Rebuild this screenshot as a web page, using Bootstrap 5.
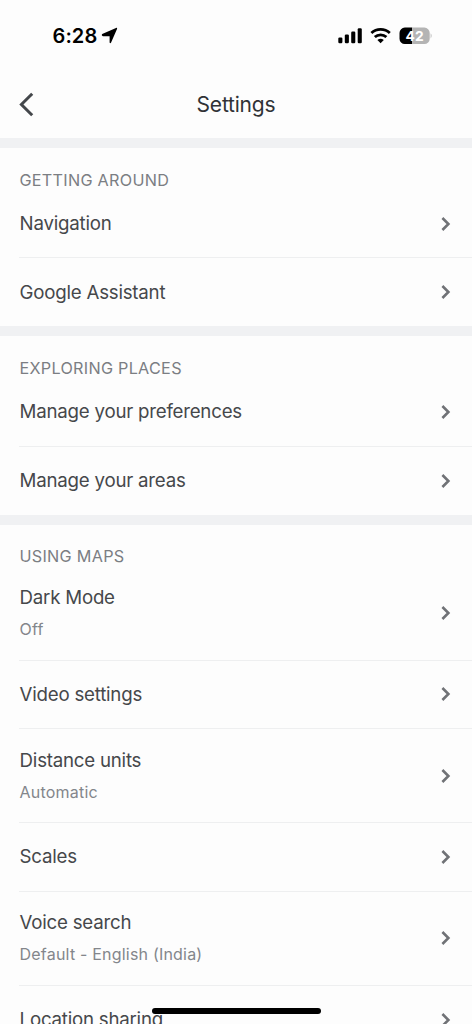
<!DOCTYPE html>
<html lang="en">
<head>
<meta charset="utf-8">
<meta name="viewport" content="width=device-width, initial-scale=1">
<title>Settings</title>
<link href="https://cdn.jsdelivr.net/npm/bootstrap@5.3.0/dist/css/bootstrap.min.css" rel="stylesheet">
<style>
  body { font-family: Inter, "Liberation Sans", sans-serif; background: #fdfdfd; color: #46484b; }
  .screen { height: 1024px; }
  .status-bar { height: 71px; padding: 0 40px 0 52.5px; color: #000; }
  .clock { font-size: 20px; font-weight: 600; line-height: 24px; letter-spacing: .1px; }
  .app-bar { height: 67px; }
  .app-title { font-size: 21px; line-height: 26px; color: #303236; letter-spacing: -.2px; }
  .back { left: 19px; top: 21px; color: #44474b; }
  .group { border-top: 10px solid #f0f1f3; }
  .group-title { height: 41.7px; padding: 20.6px 0 0 19.5px; font-size: 16.2px; line-height: 22px; letter-spacing: .28px; color: #7b7e83; }
  .group-title.tight { height: 42.1px; }
  .entry { height: 68.7px; margin-left: 19px; padding: 0 20px 0 .6px; border-bottom: 1px solid #eeeff0; font-size: 18.7px; line-height: 26px; letter-spacing: -.23px; }
  .entry > span { padding-top: 1px; }
  .group:not(:last-child) .entry:last-child { height: 68px; border-bottom: 0; }
  .group:not(:last-child) .entry:last-child > span { padding-top: .5px; }
  .entry.tall { height: 93.8px; }
  .hint { font-size: 16px; line-height: 24px; margin-top: 6px; letter-spacing: .2px; color: #83868b; }
  .chev { color: #707276; }
  .home-bar { left: 152px; top: 1008px; width: 168.5px; height: 6px; background: #000; }
</style>
</head>
<body>
<div class="screen position-relative overflow-hidden">
  <div class="status-bar d-flex align-items-center justify-content-between">
    <div class="d-flex align-items-center gap-1">
      <span class="clock">6:28</span>
      <svg width="17" height="17" viewBox="0 0 17 17"><path d="M1.2 7.1 15 .9q1.6-.5 1 1L10.1 15.6q-1 1.3-1.5-.2V9.2H2q-2-.5-.8-2.1z" fill="currentColor"/></svg>
    </div>
    <div class="d-flex align-items-center">
      <svg width="94" height="18" viewBox="0 0 94 18">
        <g fill="#000"><rect x="0.3" y="10.5" width="4.1" height="5.7" rx="1.2"/><rect x="6.8" y="7.5" width="4.1" height="8.7" rx="1.2"/><rect x="13.2" y="4.5" width="4.1" height="11.7" rx="1.2"/><rect x="19.7" y="1.2" width="4.1" height="15" rx="1.2"/></g>
        <g fill="none" stroke="#000" stroke-width="2.8"><path d="M33.4 6.1a13.4 13.4 0 0 1 18.4 0"/><path d="M36.8 10.1a8.4 8.4 0 0 1 11.6 0"/></g>
        <path d="M39.4 12.9q3.2-2.4 6.4 0L42.6 16.2z" fill="#000"/>
        <path d="M67 .6h-.2a5.3 5.3 0 0 0-5.3 5.3v5.8a5.3 5.3 0 0 0 5.3 5.3h7.4V.6z" fill="#000"/>
        <path d="M74.2.6h12.2a5.3 5.3 0 0 1 5.3 5.3v5.8a5.3 5.3 0 0 1-5.3 5.3H74.2z" fill="#b4b4b4"/>
        <path d="M92.7 6.2q1.8 2.6 0 5.2z" fill="#b4b4b4"/>
        <text x="76.6" y="13.8" text-anchor="middle" font-size="13.8" font-weight="700" fill="#fff">42</text>
      </svg>
    </div>
  </div>
  <header class="app-bar position-relative d-flex justify-content-center align-items-center">
    <svg class="back position-absolute" width="16" height="25" viewBox="0 0 16 25"><path d="m13.2 1.7-10.8 10.8 10.8 10.8" fill="none" stroke="currentColor" stroke-width="3"/></svg>
    <h1 class="app-title m-0 fw-normal">Settings</h1>
  </header>

  <section class="group">
    <div class="group-title">GETTING AROUND</div>
    <div class="entry d-flex align-items-center justify-content-between"><span>Navigation</span><svg class="chev" width="12" height="16" viewBox="0 0 12 16"><path d="m2.4 2 6 6-6 6" fill="none" stroke="currentColor" stroke-width="2.6"/></svg></div>
    <div class="entry d-flex align-items-center justify-content-between"><span>Google Assistant</span><svg class="chev" width="12" height="16" viewBox="0 0 12 16"><path d="m2.4 2 6 6-6 6" fill="none" stroke="currentColor" stroke-width="2.6"/></svg></div>
  </section>

  <section class="group">
    <div class="group-title">EXPLORING PLACES</div>
    <div class="entry d-flex align-items-center justify-content-between"><span>Manage your preferences</span><svg class="chev" width="12" height="16" viewBox="0 0 12 16"><path d="m2.4 2 6 6-6 6" fill="none" stroke="currentColor" stroke-width="2.6"/></svg></div>
    <div class="entry d-flex align-items-center justify-content-between"><span>Manage your areas</span><svg class="chev" width="12" height="16" viewBox="0 0 12 16"><path d="m2.4 2 6 6-6 6" fill="none" stroke="currentColor" stroke-width="2.6"/></svg></div>
  </section>

  <section class="group">
    <div class="group-title tight">USING MAPS</div>
    <div class="entry tall d-flex align-items-center justify-content-between"><div>Dark Mode<div class="hint">Off</div></div><svg class="chev" width="12" height="16" viewBox="0 0 12 16"><path d="m2.4 2 6 6-6 6" fill="none" stroke="currentColor" stroke-width="2.6"/></svg></div>
    <div class="entry d-flex align-items-center justify-content-between"><span>Video settings</span><svg class="chev" width="12" height="16" viewBox="0 0 12 16"><path d="m2.4 2 6 6-6 6" fill="none" stroke="currentColor" stroke-width="2.6"/></svg></div>
    <div class="entry tall d-flex align-items-center justify-content-between"><div>Distance units<div class="hint">Automatic</div></div><svg class="chev" width="12" height="16" viewBox="0 0 12 16"><path d="m2.4 2 6 6-6 6" fill="none" stroke="currentColor" stroke-width="2.6"/></svg></div>
    <div class="entry d-flex align-items-center justify-content-between"><span>Scales</span><svg class="chev" width="12" height="16" viewBox="0 0 12 16"><path d="m2.4 2 6 6-6 6" fill="none" stroke="currentColor" stroke-width="2.6"/></svg></div>
    <div class="entry tall d-flex align-items-center justify-content-between"><div>Voice search<div class="hint">Default - English (India)</div></div><svg class="chev" width="12" height="16" viewBox="0 0 12 16"><path d="m2.4 2 6 6-6 6" fill="none" stroke="currentColor" stroke-width="2.6"/></svg></div>
    <div class="entry d-flex align-items-center justify-content-between"><span>Location sharing</span><svg class="chev" width="12" height="16" viewBox="0 0 12 16"><path d="m2.4 2 6 6-6 6" fill="none" stroke="currentColor" stroke-width="2.6"/></svg></div>
  </section>

  <div class="home-bar position-absolute rounded-pill"></div>
</div>
<script src="https://cdn.jsdelivr.net/npm/bootstrap@5.3.0/dist/js/bootstrap.bundle.min.js"></script>
</body>
</html>
